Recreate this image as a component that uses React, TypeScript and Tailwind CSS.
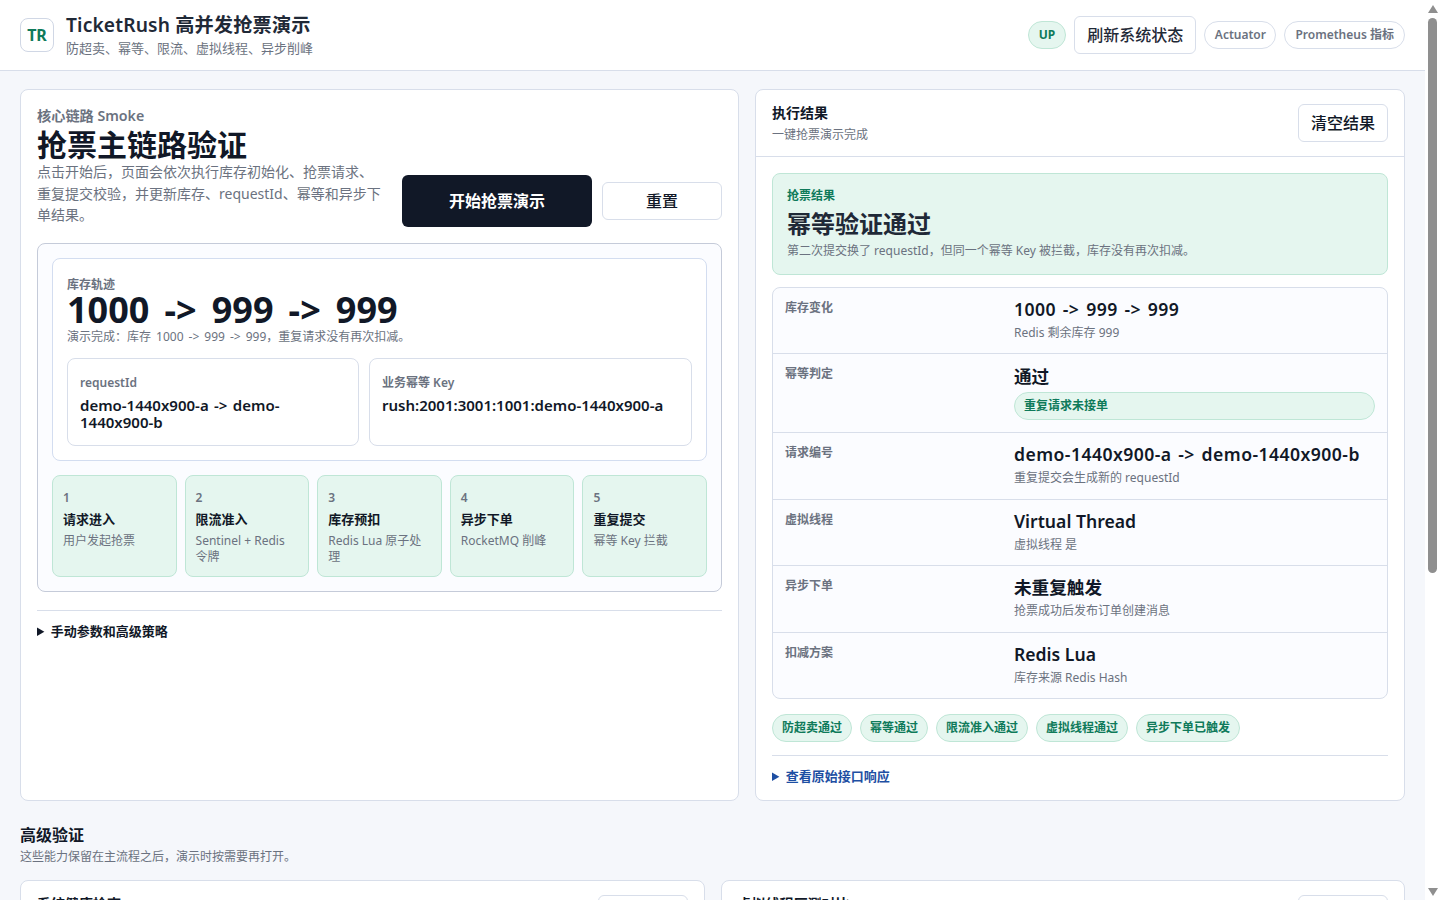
const STEPS = [
  { n: "1", title: "请求进入", desc: "用户发起抢票" },
  { n: "2", title: "限流准入", desc: "Sentinel + Redis 令牌" },
  { n: "3", title: "库存预扣", desc: "Redis Lua 原子处理" },
  { n: "4", title: "异步下单", desc: "RocketMQ 削峰" },
  { n: "5", title: "重复提交", desc: "幂等 Key 拦截" },
];

const ROWS = [
  { label: "库存变化", value: "1000 -> 999 -> 999", sub: "Redis 剩余库存 999", wide: true },
  { label: "幂等判定", value: "通过", pill: "重复请求未接单" },
  { label: "请求编号", value: "demo-1440x900-a -> demo-1440x900-b", sub: "重复提交会生成新的 requestId", wide: true },
  { label: "虚拟线程", value: "Virtual Thread", sub: "虚拟线程 是" },
  { label: "异步下单", value: "未重复触发", sub: "抢票成功后发布订单创建消息" },
  { label: "扣减方案", value: "Redis Lua", sub: "库存来源 Redis Hash" },
];

const CHIPS = ["防超卖通过", "幂等通过", "限流准入通过", "虚拟线程通过", "异步下单已触发"];

const Scrollbar = () => (
  <div aria-hidden className="sticky top-0 flex h-screen w-[15px] shrink-0 flex-col items-center bg-white">
    <svg className="mt-[5px] h-[8px] w-[10px] shrink-0" viewBox="0 0 10 8">
      <polygon points="5,0 10,8 0,8" fill="#8f8f8f" />
    </svg>
    <div className="mt-[5px] h-[555px] w-[9px] shrink-0 rounded-full bg-[#8f8f8f]" />
    <svg className="mt-[315px] h-[8px] w-[10px] shrink-0" viewBox="0 0 10 8">
      <polygon points="0,0 10,0 5,8" fill="#8f8f8f" />
    </svg>
  </div>
);

export default function App() {
  return (
    <div className="flex items-start bg-white font-['Noto_Sans','Noto_Sans_CJK_SC',sans-serif] text-[#1f2937]">
      <div className="min-h-[1400px] min-w-0 flex-1 bg-[#f5f7fb]">
        <header className="flex h-[71px] items-center justify-between border-b border-[#d8deea] bg-white px-5">
          <div className="flex items-center gap-3">
            <div className="flex h-[34px] w-[34px] items-center justify-center rounded-lg border border-[#d0d7e5] bg-white text-base font-bold text-[#0f7a5a]">TR</div>
            <div>
              <div className="text-[19.2px] leading-[24px] font-semibold tracking-[0.15px]">TicketRush 高并发抢票演示</div>
              <div className="mt-0.5 text-[13px] leading-[18px] text-[#6b7280]">防超卖、幂等、限流、虚拟线程、异步削峰</div>
            </div>
          </div>
          <div className="flex items-center gap-2">
            <span className="flex h-7 items-center rounded-full border border-[#bfe6d6] bg-[#e5f6ef] px-2.5 text-xs font-bold text-[#0f7a5a]">UP</span>
            <button className="h-[38px] rounded-md border border-[#d8deea] bg-white px-3 text-base font-medium">刷新系统状态</button>
            <span className="flex h-7 items-center rounded-full border border-[#d8deea] bg-white px-[9.5px] text-xs font-semibold text-[#6b7280]">Actuator</span>
            <span className="flex h-7 items-center rounded-full border border-[#d8deea] bg-white px-2.5 text-xs font-semibold text-[#6b7280]">Prometheus 指标</span>
          </div>
        </header>

        <main className="px-5 pt-[18px]">
          <div className="grid grid-cols-[719px_650px] gap-4">
            {/* 左侧主链路 */}
            <section className="h-[712px] rounded-lg border border-[#d8deea] bg-white p-4">
              <div className="flex items-end justify-between">
                <div className="w-[345px] pb-px">
                  <div className="text-[14.2px] leading-[20px] font-semibold whitespace-nowrap text-[#6b7280]">核心链路 Smoke</div>
                  <h1 className="-mb-[3px] text-[30px] leading-[38px] font-bold whitespace-nowrap text-[#111827]">抢票主链路验证</h1>
                  <p className="text-sm leading-[21.5px] text-[#6b7280]">点击开始后，页面会依次执行库存初始化、抢票请求、重复提交校验，并更新库存、requestId、幂等和异步下单结果。</p>
                </div>
                <div className="flex items-center gap-2.5">
                  <button className="h-[52px] w-[190px] rounded-md bg-[#111827] text-base font-semibold text-white">开始抢票演示</button>
                  <button className="h-[38px] w-[120px] rounded-md border border-[#d8deea] bg-white text-base font-medium text-[#111827]">重置</button>
                </div>
              </div>

              <div className="mt-4 rounded-lg border border-[#c5cbd9] bg-[#fbfcff] p-[14px]">
                <div className="rounded-lg border border-[#d3ddf0] bg-white px-[14px] pt-[18px] pb-[14px]">
                  <div className="text-xs leading-4 font-semibold text-[#6b7280]">库存轨迹</div>
                  <div className="-mt-px text-[36px] leading-[36px] font-bold [word-spacing:0.16em] text-[#111827]">1000 -&gt; 999 -&gt; 999</div>
                  <div className="mt-px text-xs leading-4 [word-spacing:0.16em] text-[#6b7280]">演示完成：库存 1000 -&gt; 999 -&gt; 999，重复请求没有再次扣减。</div>
                  <div className="mt-[13px] grid grid-cols-[292px_323px] gap-2.5">
                    <div className="h-[88px] rounded-lg border border-[#d8deea] px-3 pt-4">
                      <div className="text-xs leading-4 font-semibold text-[#6b7280]">requestId</div>
                      <div className="mt-1.5 text-[15px] leading-[17px] font-semibold [word-spacing:0.1em] text-[#111827]">demo-1440x900-a -&gt; demo-1440x900-b</div>
                    </div>
                    <div className="h-[88px] rounded-lg border border-[#d8deea] px-3 pt-4">
                      <div className="text-xs leading-4 font-semibold text-[#6b7280]">业务幂等 Key</div>
                      <div className="mt-1.5 text-[15px] leading-[17px] font-semibold text-[#111827]">rush:2001:3001:1001:demo-1440x900-a</div>
                    </div>
                  </div>
                </div>

                <div className="mt-[14px] grid grid-cols-5 gap-2">
                  {STEPS.map((s) => (
                    <div key={s.n} className="h-[102px] rounded-lg border border-[#bfe6d6] bg-[#e5f6ef] px-2.5 pt-[14px]">
                      <div className="text-xs leading-4 font-semibold text-[#6b7280]">{s.n}</div>
                      <div className="mt-1 text-[13px] leading-[18px] font-semibold text-[#111827]">{s.title}</div>
                      <div className="mt-[5px] text-xs leading-4 text-[#6b7280]">{s.desc}</div>
                    </div>
                  ))}
                </div>
              </div>

              <details className="mt-[18px] border-t border-[#d8deea] pt-[11px]">
                <summary className="cursor-pointer text-[13px] leading-[18px] font-semibold text-[#111827]">手动参数和高级策略</summary>
              </details>
            </section>

            {/* 右侧执行结果 */}
            <section className="h-[712px] rounded-lg border border-[#d8deea] bg-white">
              <div className="flex h-[67px] items-center justify-between border-b border-[#d8deea] px-4">
                <div>
                  <div className="text-sm leading-[20px] font-semibold text-[#111827]">执行结果</div>
                  <div className="mt-1 text-xs leading-4 text-[#6b7280]">一键抢票演示完成</div>
                </div>
                <button className="h-[38px] w-[90px] rounded-md border border-[#d8deea] bg-white text-base font-medium text-[#111827]">清空结果</button>
              </div>
              <div className="px-4 pt-4">
                <div className="h-[102px] rounded-lg border border-[#bfe6d6] bg-[#e5f6ef] px-[14px] pt-[14px]">
                  <div className="text-xs leading-4 font-semibold text-[#0f7a5a]">抢票结果</div>
                  <div className="mt-1 text-2xl leading-[32px] font-bold text-[#1f2937]">幂等验证通过</div>
                  <div className="mt-[3px] text-xs leading-4 text-[#6b7280]">第二次提交换了 requestId，但同一个幂等 Key 被拦截，库存没有再次扣减。</div>
                </div>

                <div className="mt-3 overflow-hidden rounded-lg border border-[#d8deea] bg-[#fbfcff]">
                  {ROWS.map((r, i) => (
                    <div key={r.label} className={`grid grid-cols-[217px_1fr] gap-3 px-3 ${r.pill ? "pt-[10px] pb-3" : "pt-[9px] pb-[11px]"} ${i > 0 ? "border-t border-[#d8deea]" : ""}`}>
                      <div className={`text-xs leading-[20px] font-semibold text-[#6b7280] ${r.pill ? "" : "pt-px"}`}>{r.label}</div>
                      <div>
                        <div className={`text-[17.6px] leading-6 font-semibold text-[#111827] ${r.wide ? "tracking-[0.44px] [word-spacing:0.1em]" : ""}`}>{r.value}</div>
                        {r.sub && <div className="mt-[3px] text-xs leading-[18.4px] text-[#6b7280]">{r.sub}</div>}
                        {r.pill && (
                          <div className="mt-1 flex h-7 items-center rounded-full border border-[#bfe6d6] bg-[#e5f6ef] px-[9px] text-xs font-semibold text-[#0f7a5a]">{r.pill}</div>
                        )}
                      </div>
                    </div>
                  ))}
                </div>

                <div className="mt-[15px] flex gap-2">
                  {CHIPS.map((c) => (
                    <span key={c} className="flex h-7 items-center rounded-full border border-[#bfe6d6] bg-[#e5f6ef] px-[9px] text-xs font-semibold text-[#0f7a5a]">{c}</span>
                  ))}
                </div>

                <details className="mt-[13px] border-t border-[#d8deea] pt-[11px]">
                  <summary className="cursor-pointer text-[13px] leading-[18px] font-semibold text-[#1e4fa3]">查看原始接口响应</summary>
                </details>
              </div>
            </section>
          </div>

          <section className="mt-[23px]">
            <h2 className="text-base leading-[22px] font-semibold text-[#111827]">高级验证</h2>
            <p className="mt-[3px] text-xs leading-4 text-[#6b7280]">这些能力保留在主流程之后，演示时按需要再打开。</p>
            <div className="mt-[15px] grid grid-cols-2 gap-4">
              <div className="h-[420px] rounded-lg border border-[#d8deea] bg-white">
                <div className="flex h-[67px] items-center justify-between border-b border-[#d8deea] px-4">
                  <div>
                    <div className="text-sm leading-[20px] font-semibold text-[#111827]">系统健康检查</div>
                    <div className="mt-1 text-xs leading-4 text-[#6b7280]">查看 Actuator 健康状态</div>
                  </div>
                  <button className="h-[38px] w-[90px] rounded-md border border-[#d8deea] bg-white text-base font-medium text-[#111827]">刷新</button>
                </div>
              </div>
              <div className="h-[420px] rounded-lg border border-[#d8deea] bg-white">
                <div className="flex h-[67px] items-center justify-between border-b border-[#d8deea] px-4">
                  <div>
                    <div className="text-sm leading-[20px] font-semibold text-[#111827]">虚拟线程压测对比</div>
                    <div className="mt-1 text-xs leading-4 text-[#6b7280]">对比平台线程与虚拟线程</div>
                  </div>
                  <button className="h-[38px] w-[90px] rounded-md border border-[#d8deea] bg-white text-base font-medium text-[#111827]">开始压测</button>
                </div>
              </div>
            </div>
          </section>
        </main>
      </div>
      <Scrollbar />
    </div>
  );
}
